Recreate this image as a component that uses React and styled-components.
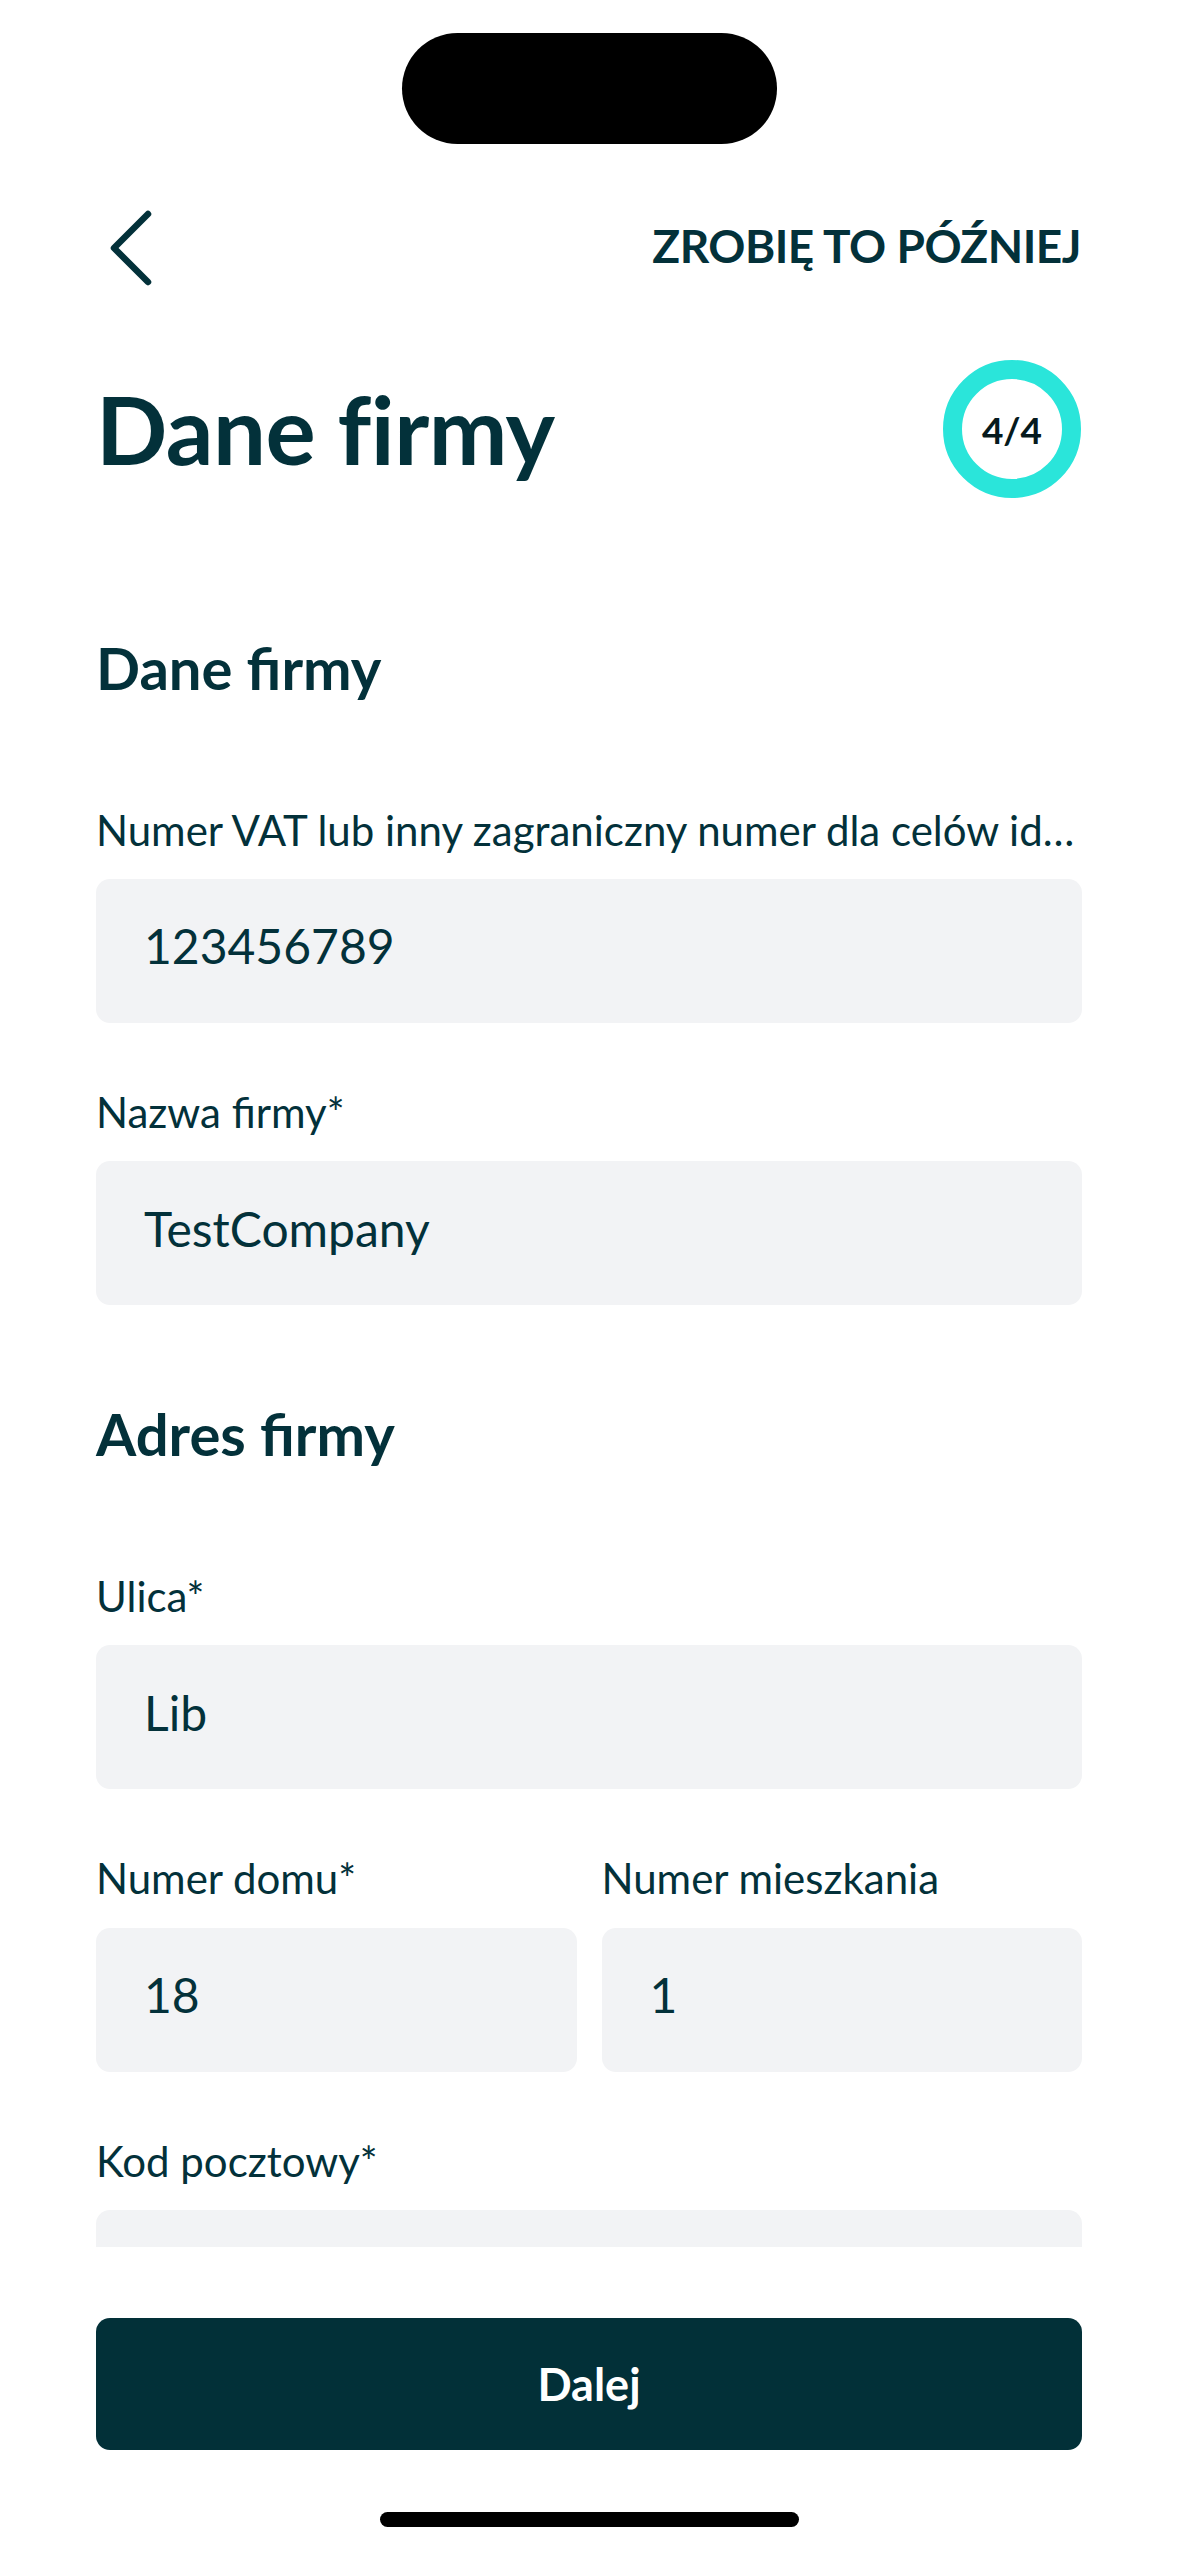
import React from "react"
import styled, { createGlobalStyle } from "styled-components"

const INK = "#03313a"

const GlobalStyle = createGlobalStyle`
  html, body {
    margin: 0;
    padding: 0;
    background: #ffffff;
  }
  body {
    font-family: "Lato", "Inter", sans-serif;
    color: ${INK};
  }
  * {
    box-sizing: border-box;
  }
`

function App() {
  return (
    <Screen>
      <GlobalStyle />
      <StatusBar>
        <Island />
      </StatusBar>

      <Header>
        <BackButton aria-label="Wstecz">
          <svg width="48" height="80" viewBox="0 0 48 80" fill="none">
            <polyline
              points="40,6 6,40 40,74"
              stroke={INK}
              strokeWidth="6.5"
              strokeLinecap="round"
              strokeLinejoin="round"
            />
          </svg>
        </BackButton>
        <SkipLink>ZROBIĘ TO PÓŹNIEJ</SkipLink>
      </Header>

      <TitleRow>
        <Title>Dane firmy</Title>
        <StepRing>4/4</StepRing>
      </TitleRow>

      <ScrollArea>
        <Section>
          <SectionTitle>Dane firmy</SectionTitle>
          <Field>
            <Label>Numer VAT lub inny zagraniczny numer dla celów identyfikacji podatkowej</Label>
            <Input>123456789</Input>
          </Field>
          <Field>
            <Label>Nazwa firmy*</Label>
            <Input>TestCompany</Input>
          </Field>
        </Section>

        <Section>
          <SectionTitle>Adres firmy</SectionTitle>
          <Field>
            <Label>Ulica*</Label>
            <Input>Lib</Input>
          </Field>
          <FieldRow>
            <Field>
              <Label>Numer domu*</Label>
              <Input>18</Input>
            </Field>
            <Field>
              <Label>Numer mieszkania</Label>
              <Input>1</Input>
            </Field>
          </FieldRow>
          <Field>
            <Label>Kod pocztowy*</Label>
            <Input />
          </Field>
        </Section>
      </ScrollArea>

      <Footer>
        <PrimaryButton>Dalej</PrimaryButton>
        <HomeIndicator />
      </Footer>
    </Screen>
  )
}

export default App

const Screen = styled.div`
  width: 1179px;
  height: 2556px;
  display: flex;
  flex-direction: column;
  overflow: hidden;
  background: #ffffff;
`

const StatusBar = styled.div`
  height: 190px;
  flex-shrink: 0;
  display: flex;
  justify-content: center;
  padding-top: 33px;
`

const Island = styled.div`
  width: 375px;
  height: 111px;
  border-radius: 56px;
  background: #000000;
`

const Header = styled.div`
  height: 116px;
  flex-shrink: 0;
  display: flex;
  align-items: center;
  justify-content: space-between;
  padding: 0 98px 0 108px;
`

const BackButton = styled.div`
  width: 48px;
  height: 80px;
  display: flex;
`

const SkipLink = styled.div`
  font-size: 46px;
  font-weight: 700;
  letter-spacing: -0.5px;
  color: ${INK};
  padding-bottom: 6px;
`

const TitleRow = styled.div`
  flex-shrink: 0;
  display: flex;
  align-items: center;
  justify-content: space-between;
  padding: 54px 98px 0 96px;
  height: 192px;
`

const Title = styled.h1`
  margin: 0;
  font-size: 94px;
  line-height: 1;
  font-weight: 700;
  letter-spacing: -0.5px;
  color: ${INK};
`

const StepRing = styled.div`
  width: 138px;
  height: 138px;
  border-radius: 50%;
  border: 19px solid #2ae5da;
  display: flex;
  align-items: center;
  justify-content: center;
  font-size: 37px;
  font-weight: 700;
  color: #061a1d;
`

const ScrollArea = styled.div`
  flex: 1;
  overflow: hidden;
  padding: 135px 97px 0 96px;
  display: flex;
  flex-direction: column;
  gap: 94px;
`

const Section = styled.div`
  display: flex;
  flex-direction: column;
  gap: 64px;
`

const SectionTitle = styled.h2`
  margin: 0 0 38px;
  font-size: 58px;
  line-height: 1.2;
  font-weight: 700;
  color: ${INK};
`

const Field = styled.div`
  display: flex;
  flex-direction: column;
  gap: 24px;
  min-width: 0;
`

const FieldRow = styled.div`
  display: grid;
  grid-template-columns: 1fr 1fr;
  gap: 25px;
`

const Label = styled.div`
  font-size: 42px;
  line-height: 1.2;
  font-weight: 400;
  color: ${INK};
  white-space: nowrap;
  overflow: hidden;
  text-overflow: ellipsis;
`

const Input = styled.div`
  height: 144px;
  flex-shrink: 0;
  border-radius: 14px;
  background: #f2f3f5;
  display: flex;
  align-items: center;
  padding: 0 48px 10px;
  font-size: 48px;
  line-height: 1.2;
  color: ${INK};
`

const Footer = styled.div`
  height: 309px;
  flex-shrink: 0;
  display: flex;
  flex-direction: column;
  align-items: center;
  padding: 71px 97px 0 96px;
`

const PrimaryButton = styled.div`
  width: 100%;
  height: 132px;
  border-radius: 14px;
  background: #023038;
  color: #ffffff;
  display: flex;
  align-items: center;
  justify-content: center;
  font-size: 45px;
  font-weight: 700;
`

const HomeIndicator = styled.div`
  margin-top: 62px;
  width: 419px;
  height: 15px;
  border-radius: 8px;
  background: #000000;
`
